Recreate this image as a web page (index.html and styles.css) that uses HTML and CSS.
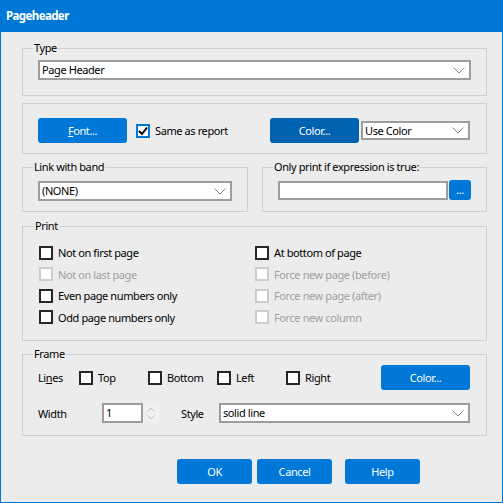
FILE: index.html
```html
<!DOCTYPE html>
<html>
<head>
<meta charset="utf-8">
<link rel="stylesheet" href="styles.css">
</head>
<body>
<div class="window">
  <div class="titlebar">Pageheader</div>
  <div class="content">
    <fieldset class="group g-type">
      <legend>Type</legend>
      <div class="combo wide"><span>Page Header</span><svg class="chev" width="12" height="7" viewBox="0 0 12 7"><path d="M0.5 0.5 L6 6 L11.5 0.5" fill="none" stroke="#888" stroke-width="1"/></svg></div>
    </fieldset>

    <div class="group g-font">
      <button class="btn btn-font"><u>F</u>ont...</button>
      <label class="check"><span class="box checked"><svg width="10" height="10" viewBox="0 0 10 10"><path d="M1 5 L4 8 L9 1.5" fill="none" stroke="#000" stroke-width="2"/></svg></span>Same as report</label>
      <span class="spacer"></span>
      <button class="btn btn-color focused">Color...</button>
      <div class="combo usecolor"><span>Use Color</span><svg class="chev" width="12" height="7" viewBox="0 0 12 7"><path d="M0.5 0.5 L6 6 L11.5 0.5" fill="none" stroke="#888" stroke-width="1"/></svg></div>
    </div>

    <div class="pair">
      <fieldset class="group g-link">
        <legend>Link with band</legend>
        <div class="combo"><span>(NONE)</span><svg class="chev" width="12" height="7" viewBox="0 0 12 7"><path d="M0.5 0.5 L6 6 L11.5 0.5" fill="none" stroke="#888" stroke-width="1"/></svg></div>
      </fieldset>
      <fieldset class="group g-expr">
        <legend>Only print if expression is true:</legend>
        <div class="exprrow">
          <div class="input expr"></div>
          <button class="btn btn-dots">...</button>
        </div>
      </fieldset>
    </div>

    <fieldset class="group g-print">
      <legend>Print</legend>
      <div class="cols">
        <div class="col">
          <label class="check"><span class="box"></span>Not on first page</label>
          <label class="check disabled"><span class="box"></span>Not on last page</label>
          <label class="check"><span class="box"></span>Even page numbers only</label>
          <label class="check"><span class="box"></span>Odd page numbers only</label>
        </div>
        <div class="col col2">
          <label class="check"><span class="box"></span>At bottom of page</label>
          <label class="check disabled"><span class="box"></span>Force new page (before)</label>
          <label class="check disabled"><span class="box"></span>Force new page (after)</label>
          <label class="check disabled"><span class="box"></span>Force new column</label>
        </div>
      </div>
    </fieldset>

    <fieldset class="group g-frame">
      <legend>Frame</legend>
      <div class="linesrow">
        <span class="lbl lbl-lines">Li<u>n</u>es</span>
        <label class="check item"><span class="box"></span>Top</label>
        <label class="check item"><span class="box"></span>Bottom</label>
        <label class="check item"><span class="box"></span>Left</label>
        <label class="check item"><span class="box"></span>Right</label>
        <span class="spacer"></span>
        <button class="btn btn-color">Color...</button>
      </div>
      <div class="widthrow">
        <span class="lbl lbl-width">Width</span>
        <div class="input spin-input">1</div>
        <div class="spin">
          <svg width="8" height="5" viewBox="0 0 8 5"><path d="M0.5 4.5 L4 1 L7.5 4.5" fill="none" stroke="#bbb"/></svg>
          <svg width="8" height="5" viewBox="0 0 8 5"><path d="M0.5 0.5 L4 4 L7.5 0.5" fill="none" stroke="#bbb"/></svg>
        </div>
        <span class="lbl lbl-style">Style</span>
        <div class="combo stylecombo"><span>solid line</span><svg class="chev" width="12" height="7" viewBox="0 0 12 7"><path d="M0.5 0.5 L6 6 L11.5 0.5" fill="none" stroke="#888" stroke-width="1"/></svg></div>
      </div>
    </fieldset>

    <div class="footer">
      <button class="btn btn-foot">OK</button>
      <button class="btn btn-foot">Cancel</button>
      <button class="btn btn-foot help">Help</button>
    </div>
  </div>
</div>
</body>
</html>
```

FILE: styles.css
```css
* { box-sizing: border-box; }
html, body { margin: 0; padding: 0; }
body {
  font-family: "Noto Sans", "Open Sans", "DejaVu Sans", sans-serif;
  font-size: 11px;
  letter-spacing: -0.4px;
  color: #000;
  background: #ececec;
}
.window {
  width: 503px;
  height: 503px;
  border: 1px solid #0078d7;
  border-top: none;
  background: #ececec;
  display: flex;
  flex-direction: column;
}
.titlebar {
  height: 32px;
  margin: 0 -1px;
  background: #0078d7;
  color: #fff;
  font-weight: bold;
  font-size: 11.5px;
  letter-spacing: -0.6px;
  line-height: 32px;
  padding-left: 6px;
}
.content {
  padding: 8px 15px 0 21px;
  display: flex;
  flex-direction: column;
}
.group {
  margin: 0;
  border: 1px solid #cfcfcf;
  min-width: 0;
}
fieldset.group { padding: 0 15px; }
legend {
  padding: 0 1px;
  margin-left: -5px;
  line-height: 16px;
  height: 16px;
}
.g-type { padding-top: 4px !important; padding-bottom: 15px !important; }
.combo {
  height: 20px;
  background: #fff;
  border: 2px solid #9d9d9d;
  display: flex;
  align-items: center;
  padding-left: 2px;
}
.combo span { flex: 1; line-height: 16px; }
.combo .chev { margin-right: 4px; }
.g-font {
  margin-top: 7px;
  height: 51px;
  padding: 14px 16px 0 15px;
  display: flex;
  align-items: flex-start;
}
.btn {
  font: inherit;
  letter-spacing: inherit;
  color: #fff;
  background: #0078d7;
  border: none;
  border-radius: 3px;
  padding: 0;
  height: 25px;
  text-align: center;
}
.btn.focused { background: #0063b1; }
.btn-font { width: 89px; }
.spacer { flex: 1; }
.g-font .check { margin-left: 9px; height: 25px; }
.btn-color { width: 89px; }
.usecolor { width: 109px; height: 19px; margin-left: 2px; margin-top: 3px; }

.check {
  display: flex;
  align-items: center;
  gap: 5px;
  white-space: nowrap;
}
.box {
  width: 14px;
  height: 14px;
  border: 2px solid #262626;
  background: #fff;
  flex: none;
  display: flex;
  align-items: center;
  justify-content: center;
}
.box.checked { border-color: #0078d7; }
.check.disabled { color: #a0a0a0; }
.check.disabled .box { border-color: #cccccc; }

.pair {
  display: flex;
  gap: 14px;
  margin-top: 5px;
}
.g-link { width: 226px; padding-top: 6px !important; padding-bottom: 10px !important; }
.g-expr { width: 225px; padding-top: 5px !important; padding-bottom: 10px !important; }
.exprrow { display: flex; align-items: center; }
.input {
  background: #fff;
  border: 2px solid #9d9d9d;
  height: 19px;
}
.expr { width: 170px; margin-top: 1px; }
.btn-dots { width: 22px; height: 20px; margin-left: 1px; line-height: 14px; }

.g-print { margin-top: 6px; padding: 8px 15px 12px 16px !important; }
.cols { display: flex; }
.col { display: flex; flex-direction: column; width: 232px; }
.col .check { height: 21.5px; }

.g-frame { margin-top: 5px; padding: 3px 16px 12px 15px !important; }
.linesrow { display: flex; align-items: center; height: 25px; }
.lbl-lines { width: 41px; }
.item { width: 69px; }
.widthrow { display: flex; align-items: center; margin-top: 13px; height: 20px; }
.lbl-width { width: 64px; }
.spin-input { width: 41px; height: 20px; padding-left: 2px; line-height: 16px; }
.spin {
  width: 16px;
  height: 20px;
  background: #f0f0f0;
  display: flex;
  flex-direction: column;
  align-items: center;
  justify-content: center;
  gap: 3px;
}
.lbl-style { margin-left: 22px; width: 38px; }
.stylecombo { flex: 1; }

.footer {
  display: flex;
  margin-top: 23px;
  padding-left: 155px;
  gap: 5px;
}
.btn-foot { width: 75px; }
.btn-foot.help { margin-left: 8px; }
```
